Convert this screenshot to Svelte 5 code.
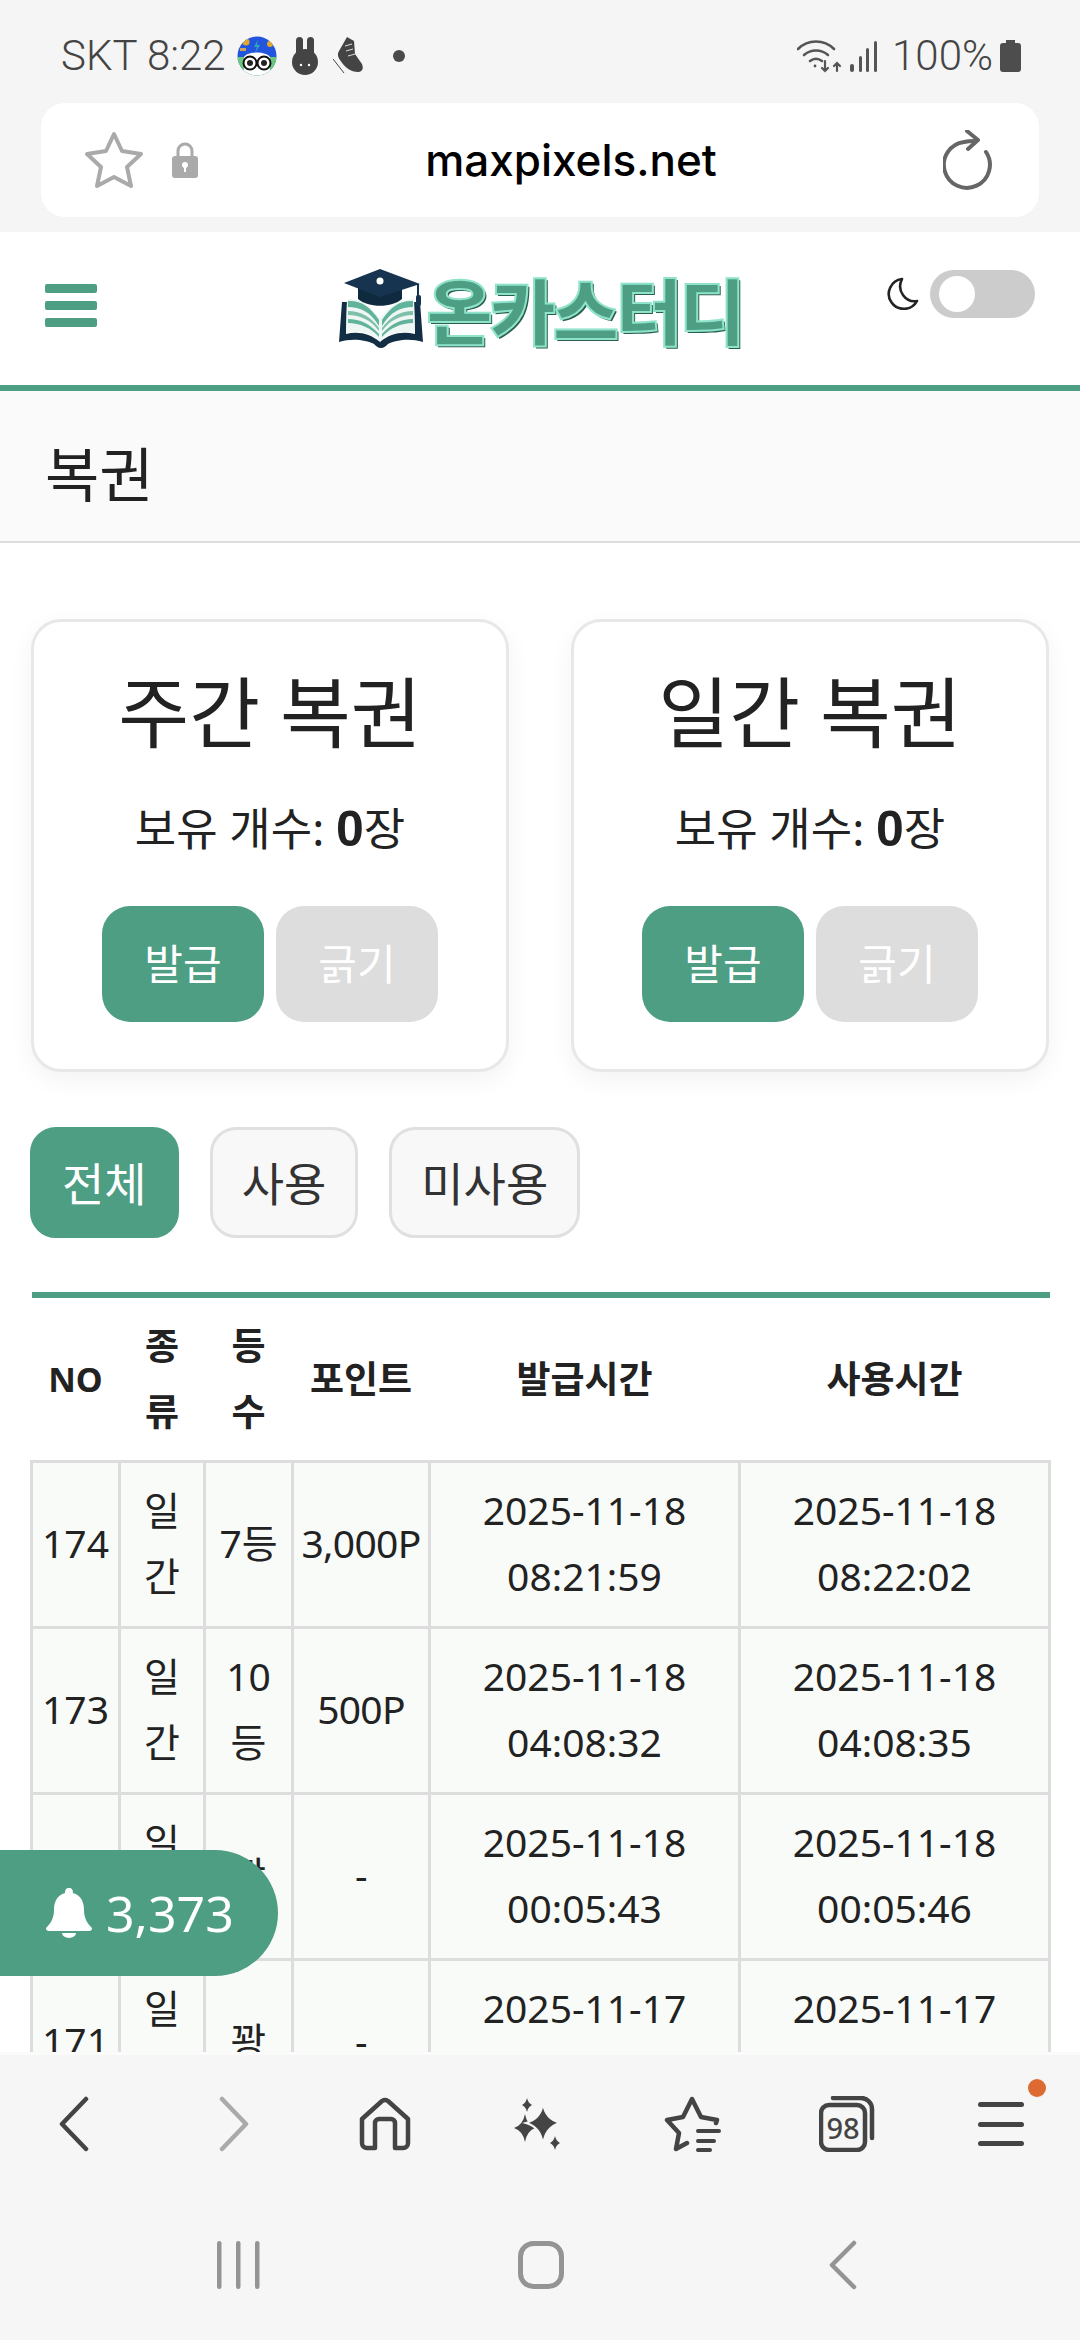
<script lang="ts">
  interface Row {
    no: string;
    kind: string;
    rank: string;
    point: string;
    issued: string[];
    used: string[];
  }

  const rows: Row[] = [
    { no: "174", kind: "일간", rank: "7등", point: "3,000P", issued: ["2025-11-18", "08:21:59"], used: ["2025-11-18", "08:22:02"] },
    { no: "173", kind: "일간", rank: "10등", point: "500P", issued: ["2025-11-18", "04:08:32"], used: ["2025-11-18", "04:08:35"] },
    { no: "172", kind: "일간", rank: "꽝", point: "-", issued: ["2025-11-18", "00:05:43"], used: ["2025-11-18", "00:05:46"] },
    { no: "171", kind: "일간", rank: "꽝", point: "-", issued: ["2025-11-17", "20:02:11"], used: ["2025-11-17", "20:02:14"] }
  ];

  const cards = ["주간 복권", "일간 복권"];
</script>

<div class="screen">
  <header class="chrome">
    <div class="status">
      <div class="status-left">
        <span>SKT 8:22</span>
        <svg class="notif" width="40" height="40" viewBox="0 0 40 40">
          <defs><clipPath id="av"><circle cx="20" cy="20" r="19.500" /></clipPath></defs>
          <g clip-path="url(#av)">
            <rect width="40" height="40" fill="#2255dd" />
            <rect y="21" width="40" height="19" fill="#6cc77c" />
            <path d="M7 21c4-6 22-6 26 0v19H7z" fill="#fff" />
            <circle cx="13" cy="27" r="6.500" fill="#fff" stroke="#111" stroke-width="2" />
            <circle cx="27" cy="27" r="6.500" fill="#fff" stroke="#111" stroke-width="2" />
            <circle cx="13" cy="27" r="3" fill="#222" />
            <circle cx="27" cy="27" r="3" fill="#222" />
            <path d="M21 4l-4 7h3l-2 6 5-8h-3z" fill="#35a8b8" />
            <circle cx="9" cy="6" r="3.500" fill="#e0a92c" />
            <circle cx="33" cy="8" r="3" fill="#e0a92c" />
            <rect x="3" y="12" width="6" height="3" fill="#c9a35c" />
          </g>
        </svg>
        <svg class="notif" width="26" height="38" viewBox="0 0 26 38" fill="#444">
          <rect x="4" y="0" width="7" height="20" rx="3.500" />
          <rect x="15" y="0" width="7" height="20" rx="3.500" />
          <ellipse cx="13" cy="25" rx="13" ry="13" />
          <circle cx="9" cy="28" r="1.200" fill="#fff" />
          <circle cx="17" cy="28" r="1.200" fill="#fff" />
        </svg>
        <svg class="notif shoe" width="30" height="38" viewBox="0 0 30 38" fill="#444">
          <path d="M14 0l7 4 1 13 7 10c2 5 0 8-4 8-7 0-13-4-18-12-2-3-3-6-1-9z" />
          <path d="M0 22l11 14" stroke="#444" stroke-width="1" />
          <path d="M12 9l7-2M13 14l7-2M15 19l7-2" stroke="#ddd" stroke-width="1" />
        </svg>
        <i class="dot"></i>
      </div>
      <div class="status-right">
        <svg class="wifi" width="45" height="34" viewBox="0 0 45 34" fill="none" stroke="#555" stroke-width="2.600" stroke-linecap="round">
          <path d="M1 10c10-10 26-10 36 0" />
          <path d="M7 16c7-6 17-6 24 0" />
          <path d="M13 22c4-3 8-3 12 0" />
          <circle cx="18" cy="27" r="1.400" fill="#555" stroke="none" />
          <path d="M28 22v10M25 29l3 3 3-3M40 32v-8M37 27l3-3 3 3" stroke-width="2.200" />
        </svg>
        <svg class="signal" width="27" height="32" viewBox="0 0 27 32" fill="#555">
          <rect x="0" y="24" width="4" height="8" rx="2" />
          <rect x="9" y="16" width="3" height="16" rx="1.500" />
          <rect x="16" y="8" width="3" height="24" rx="1.500" />
          <rect x="24" y="1" width="3" height="31" rx="1.500" />
        </svg>
        <span class="pct">100%</span>
        <svg class="battery" width="21" height="32" viewBox="0 0 21 32" fill="#4d4d4d">
          <path d="M6 0h9v3h3a3 3 0 0 1 3 3v23a3 3 0 0 1-3 3H3a3 3 0 0 1-3-3V6a3 3 0 0 1 3-3h3z" />
        </svg>
      </div>
    </div>
    <div class="urlbar">
      <div class="url-left">
        <svg width="58" height="58" viewBox="0 0 58 58" fill="none" stroke="#aaa" stroke-width="4" stroke-linejoin="round">
          <path d="M29 3l8 17 19 3-14 13 4 19-17-9-17 9 4-19L2 23l19-3z" />
        </svg>
        <svg width="28" height="38" viewBox="0 0 28 38" fill="#aaa">
          <path d="M7 16V10a7 7 0 0 1 14 0v6" fill="none" stroke="#aaa" stroke-width="3" />
          <rect x="1" y="15" width="26" height="22" rx="3" />
          <circle cx="14" cy="24" r="3" fill="#fff" />
          <rect x="13" y="25" width="2" height="6" fill="#fff" />
        </svg>
      </div>
      <span class="url">maxpixels.net</span>
      <svg class="reload" width="52" height="60" viewBox="0 0 52 60" fill="none" stroke="#666" stroke-width="4" stroke-linecap="round" stroke-linejoin="round">
        <path d="M43 22a23 23 0 1 1-22-10c4-1 8-1 11-1" />
        <path d="M24 1l11 9-10 9" />
      </svg>
    </div>
  </header>

  <div class="viewport">
    <nav class="topnav">
      <div class="burger"><i></i><i></i><i></i></div>
      <div class="logo">
        <svg width="86" height="80" viewBox="0 0 86 80">
          <path d="M4 34L1 74c13-4 27-2 35 2 2 2 4 4 7 4s5-2 7-4c8-4 22-6 35-2l-3-40h-6l1 32c-12-3-25-1-35 8-10-9-23-11-34-8l1-32z" fill="#122e45" />
          <path d="M9 31c13-1 21 5 33 19 12-14 20-20 34-19l1 34c-12-3-25-1-35 8-10-9-23-11-34-8z" fill="#eef7f3" />
          <path d="M10 33c12-1 22 5 31 19v6C33 44 22 39 10 39zM75 33c-12-1-22 5-31 19v6c8-14 19-19 31-19z" fill="#62b39b" />
          <path d="M10 43c12 0 22 5 31 17v3C33 52 22 47 10 47zM75 43c-12 0-22 5-31 17v3c8-11 19-16 31-16z" fill="#7fc0ab" />
          <path d="M10 51c12 0 22 5 31 15v3c-8-9-19-14-31-14zM75 51c-12 0-22 5-31 15v3c8-9 19-14 31-14z" fill="#62b39b" />
          <path d="M20 18v13c10 9 34 9 44 0V18z" fill="#0f2a3f" />
          <path d="M42 1l40 15-40 13L6 15z" fill="#16344f" />
          <circle cx="42" cy="13" r="3.500" fill="#fff" />
          <path d="M80 16v14" stroke="#16344f" stroke-width="2" />
          <rect x="78" y="27" width="5" height="11" rx="2" fill="#16344f" />
        </svg>
        <span class="logo-text">온카스터디</span>
      </div>
      <div class="theme">
        <svg width="32" height="33" viewBox="0 0 32 33" fill="none" stroke="#222" stroke-width="2.600" stroke-linejoin="round">
          <path d="M15 2a15 15 0 1 0 15 22C19 26 9 14 15 2z" />
        </svg>
        <div class="switch"><i></i></div>
      </div>
    </nav>

    <div class="page-title">복권</div>

    <section class="cards">
      {#each cards as card}
        <article class="card">
          <h2>{card}</h2>
          <p>보유 개수: <b>0</b>장</p>
          <div class="card-actions">
            <button class="issue">발급</button>
            <button class="scratch">긁기</button>
          </div>
        </article>
      {/each}
    </section>

    <div class="filters">
      <button class="filter active">전체</button>
      <button class="filter">사용</button>
      <button class="filter">미사용</button>
    </div>

    <table>
      <colgroup>
        <col class="c-no" /><col class="c-kind" /><col class="c-rank" /><col class="c-point" /><col class="c-time" /><col class="c-time" />
      </colgroup>
      <thead>
        <tr>
          <th class="no">NO</th><th>종류</th><th>등수</th><th>포인트</th><th>발급시간</th><th>사용시간</th>
        </tr>
      </thead>
      <tbody>
        {#each rows as row}
          <tr>
            <td>{row.no}</td>
            <td>{row.kind}</td>
            <td>{row.rank}</td>
            <td class="point">{row.point}</td>
            <td>{row.issued[0]}<br />{row.issued[1]}</td>
            <td>{row.used[0]}<br />{row.used[1]}</td>
          </tr>
        {/each}
      </tbody>
    </table>

    <div class="bell-pill">
      <svg width="46" height="50" viewBox="0 0 46 50" fill="#fff">
        <path d="M23 0c3 0 4 2 4 5 8 2 11 9 11 17 0 9 4 14 8 18 0 2-1 3-3 3H3c-2 0-3-1-3-3 4-4 8-9 8-18 0-8 3-15 11-17 0-3 1-5 4-5z" />
        <path d="M16 45h14a7 5 0 0 1-14 0z" />
      </svg>
      <span>3,373</span>
    </div>
  </div>

  <footer class="toolbar">
    <div class="tools">
      <svg class="back" width="30" height="56" viewBox="0 0 30 56" fill="none" stroke="#444" stroke-width="4.500" stroke-linecap="round" stroke-linejoin="round">
        <path d="M27 3L3 28l24 25" />
      </svg>
      <svg class="forward" width="30" height="56" viewBox="0 0 30 56" fill="none" stroke="#aaa" stroke-width="4.500" stroke-linecap="round" stroke-linejoin="round">
        <path d="M3 3l24 25L3 53" />
      </svg>
      <svg width="52" height="54" viewBox="0 0 52 54" fill="none" stroke="#444" stroke-width="4.500" stroke-linejoin="round">
        <path d="M3 22L23 4q3-2 6 0l20 18v24a5 5 0 0 1-5 5H36V26a4 4 0 0 0-4-4H20a4 4 0 0 0-4 4v25H8a5 5 0 0 1-5-5z" />
      </svg>
      <svg width="50" height="52" viewBox="0 0 50 52" fill="#444">
        <path d="M11 16Q13 27 21 30 13 33 11 44 9 33 0 30 9 27 11 16z" />
        <path d="M29 5Q31 21 46 25 31 29 29 47 27 29 12 25 27 21 29 5z" stroke="#f6f6f6" stroke-width="2" />
        <path d="M13 0Q14 5 18 7 14 9 13 14 12 9 8 7 12 5 13 0zM41 38Q42 43 46 45 42 47 41 52 40 47 36 45 40 43 41 38z" />
      </svg>
      <svg width="58" height="56" viewBox="0 0 58 56" fill="none" stroke="#444" stroke-width="4.500" stroke-linecap="round" stroke-linejoin="round">
        <path d="M52 27l1-3-16-3L28 3l-9 18-16 3 12 13-3 16 11-6" />
        <path d="M34 35h21M34 45h16M34 54h12" stroke-width="4" />
      </svg>
      <div class="tabs-icon">
        <svg width="56" height="56" viewBox="0 0 56 56" fill="none" stroke="#444" stroke-width="4.500" stroke-linecap="round">
          <path d="M14 2h28a11 11 0 0 1 11 11v29" />
          <rect x="2" y="9" width="44" height="45" rx="8" />
        </svg>
        <span>98</span>
      </div>
      <div class="menu-icon">
        <i></i><i></i><i></i>
        <b></b>
      </div>
    </div>
    <div class="softkeys">
      <svg width="44" height="48" viewBox="0 0 44 48" fill="#949494">
        <rect x="0" y="0" width="4.500" height="48" rx="2.200" />
        <rect x="19" y="0" width="4.500" height="48" rx="2.200" />
        <rect x="38" y="0" width="4.500" height="48" rx="2.200" />
      </svg>
      <svg width="46" height="48" viewBox="0 0 46 48" fill="none" stroke="#949494" stroke-width="5">
        <rect x="2.500" y="2.500" width="41" height="43" rx="13" />
      </svg>
      <svg width="28" height="50" viewBox="0 0 28 50" fill="none" stroke="#949494" stroke-width="4.500" stroke-linecap="round" stroke-linejoin="round">
        <path d="M25 3L3 25l22 22" />
      </svg>
    </div>
  </footer>
</div>

<style>
  :global(body) {
    margin: 0;
    background: #fff;
  }

  .screen {
    width: 1080px;
    height: 2340px;
    display: flex;
    flex-direction: column;
    overflow: hidden;
    font-family: "Noto Sans", "Noto Sans CJK KR", sans-serif;
    color: #222;
  }

  /* browser chrome */
  .chrome {
    height: 232px;
    flex: none;
    background: #f5f5f5;
    display: flex;
    flex-direction: column;
  }

  .status {
    height: 103px;
    display: flex;
    justify-content: space-between;
    align-items: center;
    padding: 8px 59px 0 61px;
    box-sizing: border-box;
    font-family: Roboto, sans-serif;
    font-weight: 300;
    font-size: 42px;
    color: #444;
  }

  .status-left,
  .status-right {
    display: flex;
    align-items: center;
  }

  .status-left .notif {
    margin-left: 11px;
  }

  .status-left .notif + .notif {
    margin-left: 15px;
  }

  .status-left .shoe {
    margin-left: 17px;
  }

  .dot {
    width: 12px;
    height: 12px;
    border-radius: 50%;
    background: #4a4a4a;
    margin-left: 30px;
  }

  .signal {
    margin-left: 8px;
  }

  .pct {
    margin-left: 15px;
    margin-right: 7px;
  }

  .urlbar {
    margin: 0 41px;
    height: 114px;
    background: #fff;
    border-radius: 24px;
    display: flex;
    align-items: center;
    justify-content: space-between;
    padding: 0 44px;
  }

  .url-left {
    display: flex;
    align-items: center;
    gap: 28px;
  }

  .url {
    font-family: Inter, sans-serif;
    font-weight: 500;
    font-size: 44px;
    color: #000;
  }

  /* site */
  .viewport {
    flex: 1;
    position: relative;
    overflow: hidden;
    background: #fff;
  }

  .topnav {
    height: 153px;
    border-bottom: 6px solid #4d9e83;
    display: flex;
    align-items: center;
    justify-content: space-between;
    padding: 0 45px;
  }

  .burger {
    display: flex;
    flex-direction: column;
    gap: 8px;
    width: 52px;
    margin-top: -7px;
  }

  .burger i {
    display: block;
    height: 9px;
    background: #4d9e83;
    border-radius: 2px;
  }

  .logo {
    display: flex;
    align-items: center;
    gap: 2px;
    margin-left: 97px;
    margin-top: -1px;
  }

  .logo-text {
    font-family: "Noto Sans CJK KR", sans-serif;
    font-weight: 900;
    font-size: 72px;
    line-height: 80px;
    letter-spacing: -3px;
    color: #4d9e83;
    -webkit-text-stroke: 2px #8fe3cb;
    text-shadow: 2px 2px 0 #2a5e4d;
  }

  .theme {
    display: flex;
    align-items: center;
    gap: 11px;
    margin-top: -30px;
  }

  .switch {
    width: 105px;
    height: 48px;
    border-radius: 24px;
    background: #ccc;
    display: flex;
    align-items: center;
    padding-left: 9px;
    box-sizing: border-box;
  }

  .switch i {
    width: 36px;
    height: 36px;
    background: #fff;
    border-radius: 50%;
  }

  .page-title {
    height: 152px;
    background: #fafafa;
    border-bottom: 2px solid #ddd;
    display: flex;
    align-items: center;
    padding: 10px 0 0 45px;
    box-sizing: border-box;
    font-size: 59px;
  }

  .cards {
    display: flex;
    gap: 62px;
    padding: 76px 31px 0;
  }

  .card {
    flex: 1;
    height: 453px;
    box-sizing: border-box;
    border: 3px solid #e8e8e8;
    border-radius: 30px;
    background: #fff;
    box-shadow: 0 8px 24px rgba(0, 0, 0, 0.05);
    text-align: center;
    padding-top: 41px;
  }

  .card h2 {
    margin: 0;
    font-size: 77px;
    font-weight: 400;
    line-height: 100px;
  }

  .card p {
    margin: 36px 0 0;
    font-size: 45px;
    line-height: 60px;
  }

  .card b {
    font-family: "Liberation Sans", sans-serif;
    font-weight: 700;
    font-size: 50px;
  }

  .card-actions {
    display: flex;
    justify-content: center;
    gap: 12px;
    margin-top: 47px;
  }

  .card-actions button {
    width: 162px;
    height: 116px;
    padding: 0 0 5px;
    border: none;
    border-radius: 28px;
    color: #fff;
    font: inherit;
    font-size: 42px;
  }

  .issue {
    background: #4d9e83;
  }

  .scratch {
    background: #ddd;
  }

  .filters {
    display: flex;
    gap: 31px;
    padding: 55px 30px 0;
  }

  .filter {
    height: 111px;
    padding: 0 29px 4px;
    border-radius: 26px;
    border: 3px solid #e0e0e0;
    background: #f8f8f8;
    color: #333;
    font: inherit;
    font-size: 46px;
  }

  .filter.active {
    background: #4d9e83;
    border-color: #4d9e83;
    color: #fff;
  }

  table {
    margin: 54px 0 0 30px;
    width: 1019px;
    table-layout: fixed;
    border-collapse: collapse;
    border-top: 6px solid #4d9e83;
    font-size: 39px;
    line-height: 66px;
    text-align: center;
  }

  .c-no {
    width: 88px;
  }

  .c-kind {
    width: 85px;
  }

  .c-rank {
    width: 88px;
  }

  .c-point {
    width: 137px;
  }

  .c-time {
    width: 310px;
  }

  th {
    height: 162px;
    padding: 0 10px;
    font-size: 37px;
    font-weight: 700;
    border-bottom: 3px solid #ddd;
  }

  th.no {
    font-size: 34px;
  }

  td {
    height: 166px;
    padding: 0 8px 4px;
    box-sizing: border-box;
    border: 3px solid #ddd;
    background: #f9fbf9;
  }

  td.point {
    padding: 0 0 4px;
    letter-spacing: -0.7px;
  }

  /* notification pill */
  .bell-pill {
    position: absolute;
    left: 0;
    top: 1618px;
    width: 278px;
    height: 126px;
    background: #4d9e83;
    border-radius: 0 63px 63px 0;
    display: flex;
    align-items: center;
    gap: 14px;
    padding-left: 46px;
    box-sizing: border-box;
    color: #fff;
    font-size: 50px;
  }

  /* bottom bars */
  .toolbar {
    flex: none;
    height: 285px;
    background: #f6f6f6;
    box-shadow: 0 -3px 0 #fbfbfb;
    position: relative;
  }

  .tools {
    height: 138px;
    display: grid;
    grid-template-columns: repeat(7, 154px);
    justify-items: center;
    align-items: center;
  }

  .back {
    margin-right: 6px;
  }

  .forward {
    margin-left: 6px;
  }

  .tabs-icon {
    position: relative;
    width: 56px;
    height: 56px;
  }

  .tabs-icon span {
    position: absolute;
    left: 4px;
    top: 15px;
    width: 40px;
    text-align: center;
    font-size: 29px;
    line-height: 34px;
    font-weight: 500;
    color: #444;
  }

  .menu-icon {
    position: relative;
    width: 46px;
    display: flex;
    flex-direction: column;
    gap: 14.500px;
  }

  .menu-icon i {
    display: block;
    height: 5px;
    border-radius: 3px;
    background: #444;
  }

  .menu-icon b {
    position: absolute;
    left: 50px;
    top: -23px;
    width: 18px;
    height: 18px;
    border-radius: 50%;
    background: #dd6a32;
  }

  .softkeys {
    margin: 47px 0 0 88px;
    height: 50px;
    display: grid;
    grid-template-columns: repeat(3, 302px);
    justify-items: center;
    align-items: center;
  }
</style>
